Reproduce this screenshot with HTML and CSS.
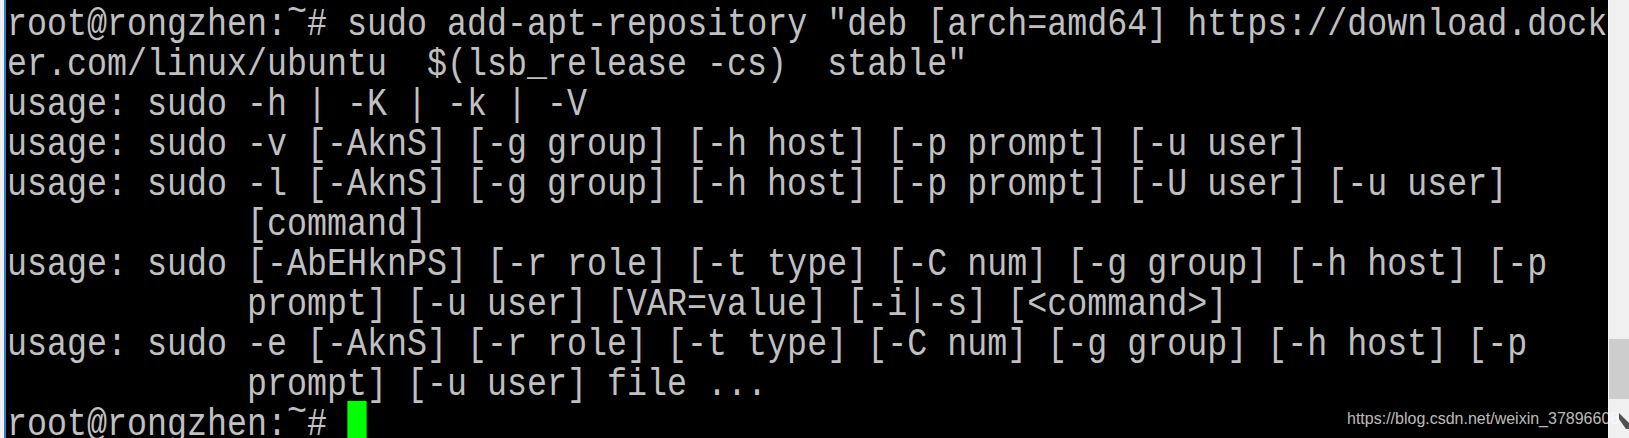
FILE: index.html
```html
<!DOCTYPE html>
<html lang="en">
<head>
<meta charset="utf-8">
<title>Terminal</title>
<link rel="stylesheet" href="styles.css">
</head>
<body>
<div class="screen">
  <div class="edge"></div>
  <div class="term">
    <div class="lines">
      <div class="row">root@rongzhen:<span class="tilde">~</span># sudo add-apt-repository "deb [arch=amd64] https://download.dock</div>
      <div class="row">er.com/linux/ubuntu  $(lsb_release -cs)  stable"</div>
      <div class="row">usage: sudo -h | -K | -k | -V</div>
      <div class="row">usage: sudo -v [-AknS] [-g group] [-h host] [-p prompt] [-u user]</div>
      <div class="row">usage: sudo -l [-AknS] [-g group] [-h host] [-p prompt] [-U user] [-u user]</div>
      <div class="row">            [command]</div>
      <div class="row">usage: sudo [-AbEHknPS] [-r role] [-t type] [-C num] [-g group] [-h host] [-p</div>
      <div class="row">            prompt] [-u user] [VAR=value] [-i|-s] [&lt;command&gt;]</div>
      <div class="row">usage: sudo -e [-AknS] [-r role] [-t type] [-C num] [-g group] [-h host] [-p</div>
      <div class="row">            prompt] [-u user] file ...</div>
      <div class="row">root@rongzhen:<span class="tilde">~</span># <span class="cursor"></span></div>
    </div>
  </div>
  <div class="scrollbar"><div class="thumb"></div></div>
</div>
<div class="watermark">https://blog.csdn.net/weixin_37896608</div>
<svg class="pointer" width="10" height="16" viewBox="0 0 10 16"><path d="M0 0 L10 10 L10 16 L7 16 L0 6 Z" fill="#505050"/></svg>
</body>
</html>
```
FILE: styles.css
```css
html, body {
  margin: 0;
  padding: 0;
  background: #000;
  overflow: hidden;
}
.screen {
  display: flex;
  width: 1629px;
  height: 438px;
}
.edge {
  width: 6px;
  flex: none;
  background: linear-gradient(to right, #eef0f2 0 4px, #2f7fd2 4px 6px);
}
.term {
  flex: 1;
  background: #000;
  overflow: hidden;
  padding: 5px 0 0 1px;
}
.lines {
  font-family: "Liberation Mono", "Courier New", monospace;
  font-size: 38px;
  line-height: 40px;
  color: #c0c0c0;
  width: max-content;
  transform: scaleX(0.87719);
  transform-origin: 0 0;
}
.row {
  height: 40px;
  white-space: pre;
}
.tilde {
  vertical-align: 12px;
  line-height: 0;
}
.cursor {
  display: inline-block;
  width: 1ch;
  height: 44px;
  margin-top: -4px;
  background: #00ff00;
  vertical-align: top;
}
.scrollbar {
  width: 21px;
  flex: none;
  background: #f0f0f0;
  border-left: 1px solid #f8f8f8;
  box-sizing: border-box;
  padding-top: 339px;
}
.thumb {
  height: 60px;
  background: #cdcdcd;
}
.watermark {
  position: absolute;
  left: 1347px;
  top: 409px;
  font-family: "Liberation Sans", Arial, sans-serif;
  font-size: 16px;
  line-height: 20px;
  color: rgba(255, 255, 255, 0.74);
  white-space: nowrap;
}
.pointer {
  position: absolute;
  left: 1619px;
  top: 413px;
}
```
